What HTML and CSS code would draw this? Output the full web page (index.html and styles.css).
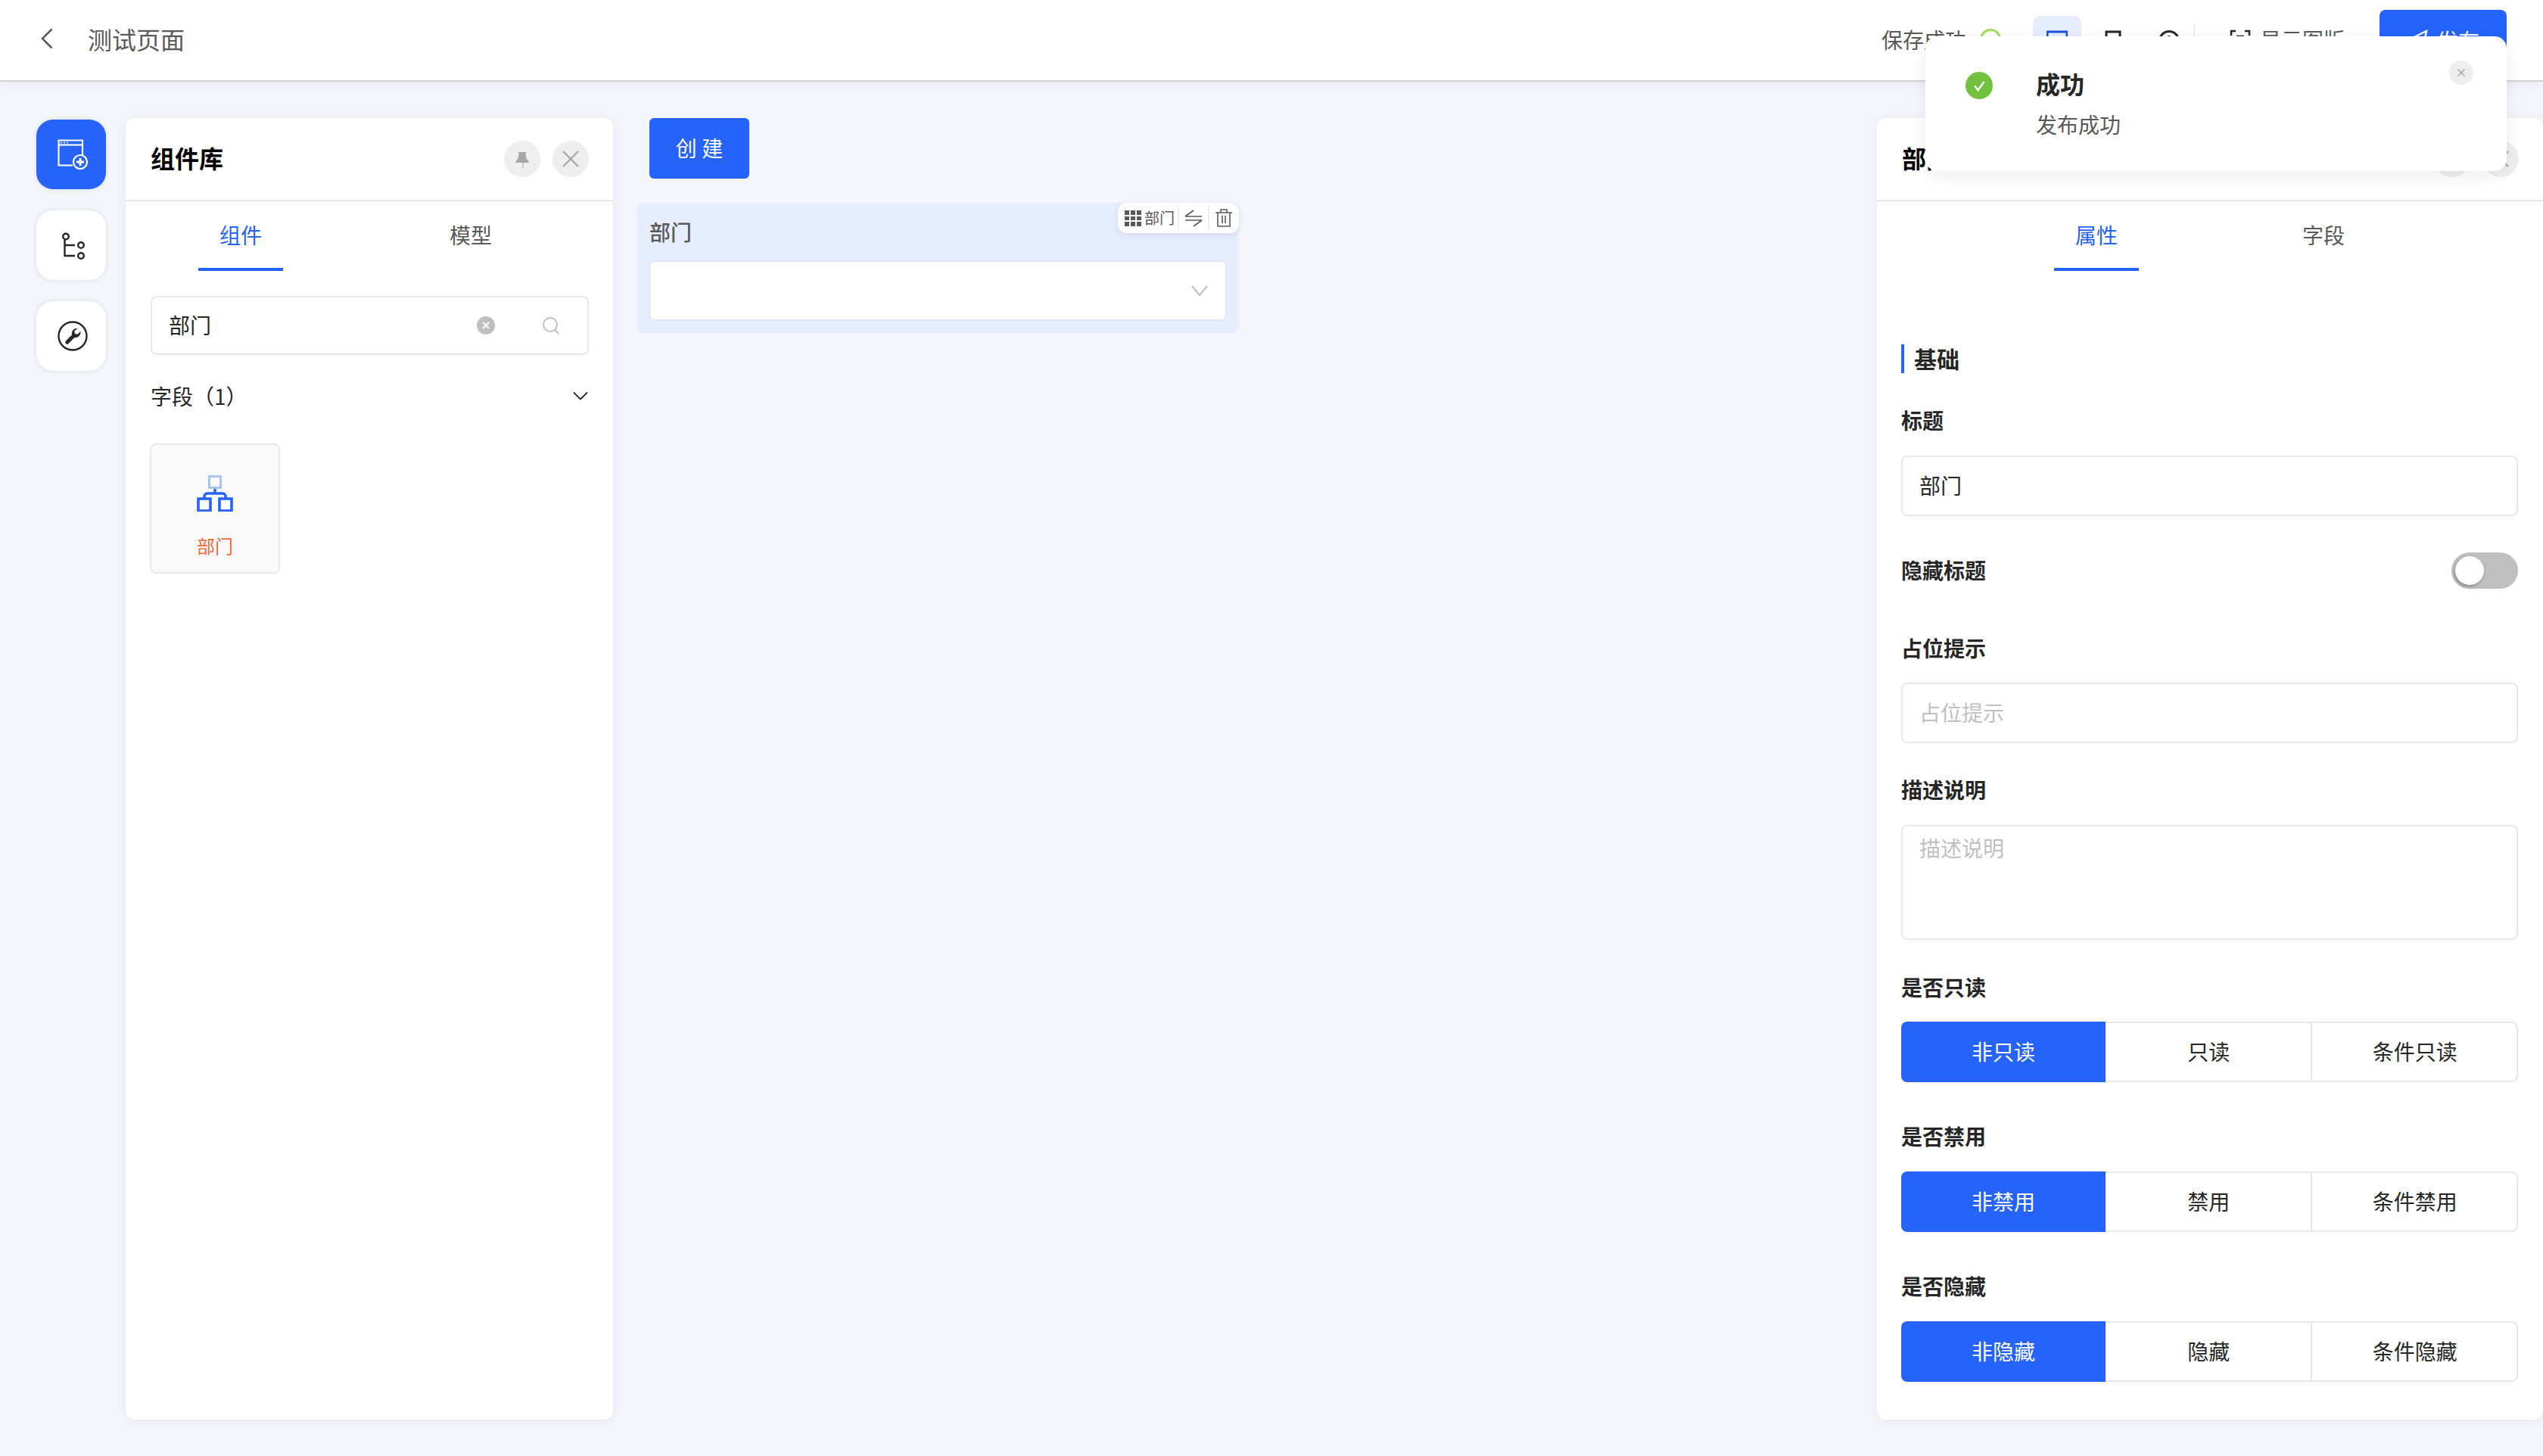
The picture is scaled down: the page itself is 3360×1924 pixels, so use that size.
FILE: index.html
```html
<!DOCTYPE html>
<html lang="zh-CN">
<head>
<meta charset="utf-8">
<title>测试页面</title>
<link rel="stylesheet" href="styles.css">
</head>
<body>
<header class="topbar">
  <div class="top-left">
    <svg class="back" viewBox="0 0 16 28"><path d="M14.500 1.500 2 14l12.500 12.500"/></svg>
    <span class="page-title">测试页面</span>
  </div>
  <div class="top-right">
    <span class="saved">保存成功</span>
    <span class="saved-ring"></span>
    <div class="device active"><svg viewBox="0 0 28 28"><path d="M1 3h26v19H1z"/></svg></div>
    <div class="device"><svg viewBox="0 0 28 28"><path d="M5 3h18v24H5z"/></svg></div>
    <div class="device last"><svg viewBox="0 0 28 28"><circle cx="14" cy="15" r="12.500"/><path d="M14 8v8"/></svg></div>
    <span class="top-sep"></span>
    <div class="old-link">
      <svg viewBox="0 0 28 28"><path d="M8 3H2v6M20 3h6v6M8 25H2v-6M20 25h6v-6M9 10h10"/></svg>
      <span>显示图版</span>
    </div>
    <button class="publish">
      <svg viewBox="0 0 28 28"><path d="M26 2 2 14l8 3 3 9 4-6 5 2z"/></svg>
      <span>发布</span>
    </button>
  </div>
</header>

<main class="workspace">
  <nav class="rail">
    <div class="rail-btn on">
      <svg viewBox="0 0 40 40">
        <path class="ws" d="M33 21V1.500H1.500v33H20"/><path class="ws" d="M1.500 7.500H33"/>
        <circle class="wf" cx="5" cy="4.500" r="1"/><circle class="wf" cx="9" cy="4.500" r="1"/><circle class="wf" cx="13" cy="4.500" r="1"/>
        <circle class="ws bl" cx="30" cy="30" r="9"/><path class="ws thick" d="M30 25v10M25 30h10"/>
      </svg>
    </div>
    <div class="rail-btn">
      <svg viewBox="0 0 40 40">
        <circle class="ds" cx="11" cy="8.500" r="3.800"/><path class="ds" d="M9.500 13v21H23M9.500 20H23"/>
        <circle class="ds" cx="31" cy="20" r="3.800"/><circle class="ds" cx="31" cy="34" r="3.800"/>
      </svg>
    </div>
    <div class="rail-btn">
      <svg viewBox="0 0 40 40">
        <circle class="ds" cx="20" cy="20" r="18.500"/>
        <path class="df" d="M26.500 10a6.800 6.800 0 0 0-7.500 8.500L11 26.500a2.400 2.400 0 0 0 3.500 3.500l8-8a6.800 6.800 0 0 0 7.800-8l-3.800 3.800-3.500-.8-.8-3.500z"/>
      </svg>
    </div>
  </nav>

  <section class="panel lib">
    <div class="panel-head">
      <h2>组件库</h2>
      <div class="head-actions">
        <span class="round"><svg viewBox="0 0 24 24"><path class="gf" d="M6.500 3h11l-1 2 .8 6 3.200 4.500V17h-7v7h-1V17H3.500v-1.500L6.700 11l.8-6z"/></svg></span>
        <span class="round"><svg viewBox="0 0 24 24"><path class="gs" d="M2 2l20 20M22 2 2 22"/></svg></span>
      </div>
    </div>
    <div class="tabs tabs-left">
      <div class="tab cur"><span>组件</span></div>
      <div class="tab"><span>模型</span></div>
    </div>
    <div class="lib-body">
      <div class="search">
        <span class="grow">部门</span>
        <span class="clear"><svg viewBox="0 0 24 24"><path d="M8 8l8 8M16 8l-8 8"/></svg></span>
        <svg class="magnifier" viewBox="0 0 24 24"><circle cx="11" cy="11" r="9"/><path d="M17.500 18 22 23"/></svg>
      </div>
      <div class="group-head">
        <span>字段（1）</span>
        <svg viewBox="0 0 20 12"><path d="M1 1.500 10 10.500l9-9"/></svg>
      </div>
      <div class="comp-card">
        <svg viewBox="0 0 48 48">
          <path class="org-top" d="M16.500 1.500h15v15h-15z"/>
          <path class="org" d="M24 18v6M10 31v-3a4 4 0 0 1 4-4h20a4 4 0 0 1 4 4v3M2 31h16v16H2zM30 31h16v16H30z"/>
        </svg>
        <span>部门</span>
      </div>
    </div>
  </section>

  <section class="canvas">
    <button class="create">创 建</button>
    <div class="field-block">
      <div class="field-tools">
        <svg class="grid-ico" viewBox="0 0 22 21"><path d="M0 0h6v6H0zM8 0h6v6H8zM16 0h6v6h-6zM0 8h6v5H0zM8 8h6v5H8zM16 8h6v5h-6zM0 15h6v6H0zM8 15h6v6H8zM16 15h6v6h-6z"/></svg>
        <span class="tool-name">部门</span>
        <i></i>
        <svg class="tool-ico" viewBox="0 0 24 24"><path d="M1 10 12 2M1 10h22M1 15h22M23 15l-11 8"/></svg>
        <i></i>
        <svg class="tool-ico" viewBox="0 0 24 24"><path d="M1 5h22M8 5V1h8v4M4 5v18h16V5M10 9v10M14 9v10"/></svg>
      </div>
      <label class="field-label">部门</label>
      <div class="select">
        <svg viewBox="0 0 22 14"><path d="M1 1l10 12L21 1"/></svg>
      </div>
    </div>
  </section>

  <aside class="panel props">
    <div class="panel-head">
      <h2>部门</h2>
      <div class="head-actions">
        <span class="round"><svg viewBox="0 0 24 24"><path class="gf" d="M6.500 3h11l-1 2 .8 6 3.200 4.500V17h-7v7h-1V17H3.500v-1.500L6.700 11l.8-6z"/></svg></span>
        <span class="round"><svg viewBox="0 0 24 24"><path class="gs" d="M2 2l20 20M22 2 2 22"/></svg></span>
      </div>
    </div>
    <div class="tabs tabs-right">
      <div class="tab cur"><span>属性</span></div>
      <div class="tab"><span>字段</span></div>
    </div>
    <div class="form">
      <h3 class="sec">基础</h3>
      <label class="lbl l-title">标题</label>
      <div class="ipt">部门</div>
      <div class="row-switch">
        <label class="lbl">隐藏标题</label>
        <span class="switch"><b></b></span>
      </div>
      <label class="lbl l-ph">占位提示</label>
      <div class="ipt ph">占位提示</div>
      <label class="lbl l-desc">描述说明</label>
      <div class="area ph">描述说明</div>
      <label class="lbl l-seg first">是否只读</label>
      <div class="seg"><span class="sel">非只读</span><span>只读</span><span>条件只读</span></div>
      <label class="lbl l-seg">是否禁用</label>
      <div class="seg"><span class="sel">非禁用</span><span>禁用</span><span>条件禁用</span></div>
      <label class="lbl l-seg">是否隐藏</label>
      <div class="seg"><span class="sel">非隐藏</span><span>隐藏</span><span>条件隐藏</span></div>
    </div>
  </aside>
</main>

<div class="toast">
  <span class="toast-ico"><svg viewBox="0 0 36 36"><path d="M12 18.500 16.500 24 24.500 13"/></svg></span>
  <div class="toast-text">
    <strong>成功</strong>
    <p>发布成功</p>
  </div>
  <span class="toast-close"><svg viewBox="0 0 12 12"><path d="M1.500 1.500l9 9M10.500 1.500l-9 9"/></svg></span>
</div>
</body>
</html>
```
FILE: styles.css
```css
* { box-sizing: border-box; }
html, body { margin: 0; height: 100%; }
body {
  width: 3360px;
  height: 1924px;
  overflow: hidden;
  background: #f3f6fa;
  font-family: "Noto Sans CJK SC", "Liberation Sans", sans-serif;
  font-size: 28px;
  color: #262626;
  display: flex;
  flex-direction: column;
}
svg { display: block; fill: none; }

/* top bar */
.topbar {
  height: 108px;
  flex: none;
  background: #fff;
  border-bottom: 2px solid #d4d4d4;
  box-shadow: 0 4px 16px rgba(0, 0, 0, .05);
  display: flex;
  justify-content: space-between;
  padding: 0 48px 0 54px;
  position: relative;
}
.top-left { display: flex; align-items: center; height: 106px; }
.back { width: 16px; height: 28px; margin-right: 46px; margin-top: -4px; }
.back path { stroke: #595959; stroke-width: 2.500; }
.page-title { font-size: 32px; line-height: 44px; color: #595959; margin-top: -4px; }
.top-right { display: flex; align-items: flex-start; }
.saved { color: #595959; line-height: 40px; margin-top: 32px; margin-right: 18px; }
.saved-ring {
  width: 28px; height: 28px; margin-top: 38px; margin-right: 42px;
  border: 3px solid #a0de5e; border-radius: 50%;
}
.device {
  width: 64px; height: 64px; margin-top: 21px; margin-right: 10px;
  border-radius: 10px; display: flex; justify-content: center; align-items: center;
}
.device.last { margin-right: 0; }
.device.active { background: #e6edfd; }
.device svg { width: 28px; height: 28px; stroke: #262626; stroke-width: 3; }
.device.active svg { stroke: #1d52d6; }
.top-sep { width: 2px; height: 40px; background: #eee; margin: 31px 46px 0 0; }
.old-link { display: flex; align-items: center; gap: 12px; margin-top: 32px; margin-right: 46px; color: #595959; line-height: 40px; }
.old-link svg { width: 28px; height: 28px; stroke: #262626; stroke-width: 2.500; }
.publish {
  width: 168px; height: 80px; margin-top: 13px; border: 0; border-radius: 8px;
  background: #2563fa; color: #fff; font: inherit;
  display: flex; align-items: center; justify-content: center; gap: 12px;
}
.publish svg { width: 28px; height: 28px; stroke: #fff; stroke-width: 2.500; }

/* workspace */
.workspace { flex: 1; display: flex; align-items: stretch; padding: 48px 0 48px 48px; min-height: 0; }
.rail { width: 92px; flex: none; display: flex; flex-direction: column; gap: 28px; margin-top: 2px; }
.rail-btn {
  width: 92px; height: 92px; border-radius: 22px; background: #fff;
  box-shadow: 0 0 6px rgba(60, 70, 110, .14);
  display: flex; align-items: center; justify-content: center; padding-left: 4px;
}
.rail-btn.on { background: #2563fa; }
.rail-btn svg { width: 40px; height: 40px; }
.ws { stroke: #fff; stroke-width: 2.200; }
.wf { fill: #fff; }
.bl { fill: #2563fa; }
.thick { stroke-width: 3; }
.ds { stroke: #262626; stroke-width: 2.400; }
.df { fill: #262626; }

.panel {
  background: #fff; border-radius: 12px;
  box-shadow: 0 2px 14px rgba(60, 80, 120, .08);
  display: flex; flex-direction: column;
}
.lib { width: 644px; flex: none; margin-left: 26px; }
.props { width: 880px; flex: none; }
.panel-head {
  height: 110px; flex: none; border-bottom: 2px solid #e8e8ec;
  display: flex; align-items: center; justify-content: space-between;
  padding: 0 32px 0 33px;
}
.panel-head h2 { margin: -4px 0 0; font-size: 32px; font-weight: 700; color: #000; line-height: 44px; }
.head-actions { display: flex; gap: 16px; }
.round {
  width: 48px; height: 48px; border-radius: 50%; background: #eeeeee;
  display: flex; align-items: center; justify-content: center;
}
.round svg { width: 24px; height: 24px; }
.gf { fill: #a6a6a6; }
.gs { stroke: #a6a6a6; stroke-width: 2.200; }

/* tabs */
.tabs { display: flex; height: 92px; flex: none; }
.tabs-right { justify-content: center; }
.tab { width: 304px; display: flex; justify-content: center; }
.tabs-right .tab { width: 300px; }
.tab span {
  width: 112px; height: 92px; line-height: 88px; text-align: center;
  color: #595959; border-bottom: 4px solid transparent;
}
.tab.cur span { color: #2563fa; border-bottom-color: #2563fa; }

/* library */
.lib-body { padding: 33px 32px 0 33px; flex: 1; }
.search {
  height: 78px; border: 2px solid #e6e8ee; border-radius: 8px;
  display: flex; align-items: center; padding: 0 36px 0 22px;
}
.grow { flex: 1; margin-top: -2px; }
.clear { width: 24px; height: 24px; border-radius: 50%; background: #bfbfbf; margin-right: 62px; }
.clear svg { width: 24px; height: 24px; stroke: #fff; stroke-width: 2; }
.magnifier { width: 24px; height: 24px; stroke: #bfbfbf; stroke-width: 2; }
.group-head {
  display: flex; align-items: center; justify-content: space-between;
  margin-top: 34px; height: 40px; padding-right: 1px;
}
.group-head svg { width: 20px; height: 12px; stroke: #262626; stroke-width: 1.800; }
.comp-card {
  width: 172px; height: 172px; margin: 43px 0 0 -1px; background: #f9f9f9;
  border: 2px solid #e6e9ef; border-radius: 8px;
  display: flex; flex-direction: column; align-items: center; padding-top: 40px;
}
.comp-card svg { width: 48px; height: 48px; }
.org-top { stroke: #a8c4ff; stroke-width: 3; }
.org { stroke: #2563fa; stroke-width: 3.600; }
.comp-card span { font-size: 24px; line-height: 34px; color: #f0683a; margin-top: 28px; }

/* canvas */
.canvas { flex: 1; min-width: 0; padding: 0 843px 0 32px; }
.create {
  display: block; width: 132px; height: 80px; margin: 0 0 32px 16px; border: 0; border-radius: 6px;
  background: #2563fa; color: #fff; font: inherit; padding: 0 0 2px;
}
.field-block {
  position: relative; height: 172px; background: #e6edfd; border-radius: 8px;
  padding: 18px 18px 0 17px; width: 795px;
}
.field-label { display: block; font-weight: 500; color: #595959; line-height: 40px; margin-left: -1px; }
.select {
  height: 76px; margin-top: 20px; background: #fff; border-radius: 6px;
  box-shadow: 0 0 3px rgba(60, 70, 110, .14);
  display: flex; align-items: center; justify-content: flex-end; padding-right: 23px;
}
.select svg { width: 22px; height: 14px; stroke: #bfbfbf; stroke-width: 2; }
.field-tools {
  position: absolute; top: 0; right: 0; width: 160px; height: 40px;
  background: #fff; border-radius: 12px; box-shadow: 0 2px 8px rgba(60, 70, 110, .12);
  display: flex; align-items: center; padding-left: 9px;
}
.grid-ico { width: 22px; height: 21px; fill: #595959; flex: none; }
.tool-name { font-size: 20px; line-height: 28px; color: #595959; margin: 0 4px 0 4px; }
.field-tools i { width: 2px; height: 30px; background: #eeeeee; margin-right: 7px; flex: none; }
.tool-ico { width: 24px; height: 24px; stroke: #595959; stroke-width: 1.600; flex: none; margin-right: 7px; }

/* property form */
.form { padding: 0 33px 0 32px; flex: 1; }
.sec {
  margin: 97px 0 0; height: 38px; border-left: 4px solid #2563fa; padding-left: 13px;
  font-size: 30px; font-weight: 700; line-height: 36px; color: #262626;
}
.lbl { display: block; font-size: 28px; font-weight: 700; line-height: 38px; height: 40px; color: #262626; }
.l-title { margin-top: 43px; margin-bottom: 26px; }
.ipt {
  height: 80px; border: 2px solid #e6e8ee; border-radius: 8px;
  padding-left: 22px; line-height: 74px;
}
.ph { color: #bfbfbf; }
.row-switch { display: flex; align-items: center; justify-content: space-between; margin-top: 48px; height: 48px; }
.switch {
  width: 88px; height: 48px; border-radius: 24px; background: #bfbfbf;
  padding: 5px; display: block;
}
.switch b { display: block; width: 38px; height: 38px; border-radius: 50%; background: #fff; box-shadow: -1px 2px 4px rgba(0, 0, 0, .3); }
.l-ph { margin-top: 59px; margin-bottom: 25px; }
.l-desc { margin-top: 42px; margin-bottom: 26px; }
.area {
  height: 152px; border: 2px solid #e6e8ee; border-radius: 8px;
  padding: 8px 22px 0; line-height: 40px;
}
.l-seg { margin-top: 52px; margin-bottom: 26px; }
.l-seg.first { margin-top: 43px; margin-bottom: 25px; }
.seg { display: flex; height: 80px; }
.seg span {
  flex: 1; display: flex; align-items: center; justify-content: center;
  border: 2px solid #e6e8ee; border-left-width: 0; padding: 0 0 2px 2px;
}
.seg span:last-child { border-radius: 0 8px 8px 0; }
.seg .sel { flex: none; width: 270px; background: #2563fa; border-color: #2563fa; color: #fff; border-radius: 8px 0 0 8px; }

/* toast */
.toast {
  position: absolute; left: 2544px; top: 48px; width: 768px; height: 178px;
  background: #fff; border-radius: 16px; box-shadow: 0 6px 24px rgba(0, 0, 0, .07);
  display: flex; align-items: flex-start; padding: 47px 44px 0 53px;
}
.toast-ico { width: 36px; height: 36px; border-radius: 50%; background: #73c23f; flex: none; margin-right: 58px; }
.toast-ico svg { width: 36px; height: 36px; stroke: #fff; stroke-width: 2.500; }
.toast-text { flex: 1; margin-top: -5px; margin-left: -1px; }
.toast-text strong { display: block; font-size: 32px; line-height: 40px; font-weight: 700; color: #262626; }
.toast-text p { margin: 14px 0 0; font-size: 28px; line-height: 40px; color: #595959; }
.toast-close {
  width: 32px; height: 32px; border-radius: 50%; background: #eee; margin-top: -15px;
  display: flex; align-items: center; justify-content: center;
}
.toast-close svg { width: 12px; height: 12px; stroke: #a6a6a6; stroke-width: 1.500; }
```
